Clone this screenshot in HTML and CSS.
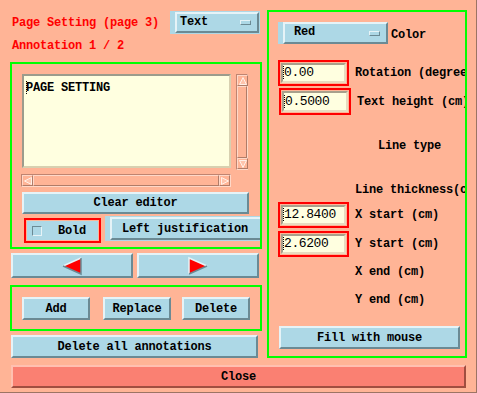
FILE: index.html
```html
<!DOCTYPE html>
<html lang="en">

<head>
  <meta charset="UTF-8">
  <meta name="viewport" content="width=device-width, initial-scale=1.0">
  <title>Page Setting</title>
  <link rel="stylesheet" href="styles.css">
</head>

<body>
  <div class="window">
    <div class="main">
      <div class="left">
        <div class="head">
          <span class="title">Page Setting (page 3)</span>
          <div class="option option-type">
            <div class="option-btn">Text<span class="ind"></span></div>
          </div>
        </div>
        <div class="subtitle">Annotation 1 / 2</div>

        <div class="frame editor-frame">
          <div class="editor-row">
            <div class="textarea"><span class="cursor"></span>PAGE SETTING</div>
            <div class="vscroll">
              <div class="arrow-box">
                <svg width="8" height="8" viewBox="0 0 8 8"><polygon points="4,0.5 7.5,7.5 0.5,7.5" fill="#ffc4ac" stroke="#fff0e8" stroke-width="1"/></svg>
              </div>
              <div class="thumb"></div>
              <div class="arrow-box">
                <svg width="8" height="8" viewBox="0 0 8 8"><polygon points="0.5,0.5 7.5,0.5 4,7.5" fill="#ffc4ac" stroke="#fff0e8" stroke-width="1"/></svg>
              </div>
            </div>
          </div>
          <div class="hscroll">
            <div class="arrow-box">
              <svg width="8" height="8" viewBox="0 0 8 8"><polygon points="0.5,4 7.5,0.5 7.5,7.5" fill="#ffc4ac" stroke="#fff0e8" stroke-width="1"/></svg>
            </div>
            <div class="thumb"></div>
            <div class="arrow-box">
              <svg width="8" height="8" viewBox="0 0 8 8"><polygon points="0.5,0.5 7.5,4 0.5,7.5" fill="#ffc4ac" stroke="#fff0e8" stroke-width="1"/></svg>
            </div>
          </div>
          <div class="btn clear-btn">Clear editor</div>
          <div class="style-row">
            <div class="toggle">
              <div class="toggle-inner"><span class="check"></span>Bold</div>
            </div>
            <div class="option option-just">
              <div class="option-btn">Left justification</div>
            </div>
          </div>
        </div>

        <div class="nav-row">
          <div class="btn nav-btn">
            <svg width="22" height="20" viewBox="0 0 22 20">
              <polygon points="2,10 20,2 20,18" fill="#ff0000"/>
              <polyline points="2,10 20,2" fill="none" stroke="#e6f3f7" stroke-width="1.5"/>
              <polyline points="20,2 20,18 2,10" fill="none" stroke="#6b8a94" stroke-width="1.5"/>
            </svg>
          </div>
          <div class="btn nav-btn">
            <svg width="22" height="20" viewBox="0 0 22 20">
              <polygon points="2,2 20,10 2,18" fill="#ff0000"/>
              <polyline points="2,18 2,2 20,10" fill="none" stroke="#e6f3f7" stroke-width="1.5"/>
              <polyline points="20,10 2,18" fill="none" stroke="#6b8a94" stroke-width="1.5"/>
            </svg>
          </div>
        </div>

        <div class="frame action-frame">
          <div class="btn action-btn">Add</div>
          <div class="btn action-btn replace">Replace</div>
          <div class="btn action-btn delete">Delete</div>
        </div>

        <div class="btn delete-all">Delete all annotations</div>
      </div>

      <div class="frame right">
        <div class="color-row">
          <div class="option option-color">
            <div class="option-btn">Red<span class="ind"></span></div>
          </div>
          <span class="label color-label">Color</span>
        </div>
        <div class="field-row rotation-row">
          <div class="field"><div class="input"><span class="cursor"></span>0.00</div></div>
          <span class="label">Rotation (degrees)</span>
        </div>
        <div class="field-row height-row">
          <div class="field"><div class="input"><span class="cursor"></span>0.5000</div></div>
          <span class="label">Text height (cm)</span>
        </div>
        <div class="label line-type">Line type</div>
        <div class="label line-thick">Line thickness(cm)</div>
        <div class="field-row xstart-row">
          <div class="field"><div class="input"><span class="cursor"></span>12.8400</div></div>
          <span class="label">X start (cm)</span>
        </div>
        <div class="field-row ystart-row">
          <div class="field"><div class="input"><span class="cursor"></span>2.6200</div></div>
          <span class="label">Y start (cm)</span>
        </div>
        <div class="label end-label xend">X end (cm)</div>
        <div class="label end-label yend">Y end (cm)</div>
        <div class="btn fill-btn">Fill with mouse</div>
      </div>
    </div>

    <div class="close-btn">Close</div>
  </div>
</body>

</html>
```

FILE: styles.css
```css
* {
  box-sizing: border-box;
}

body {
  margin: 0;
  padding: 0;
  font-family: "Liberation Mono", "DejaVu Sans Mono", monospace;
  font-weight: bold;
  font-size: 12px;
  letter-spacing: -0.2px;
  color: #000;
}

.window {
  width: 477px;
  height: 393px;
  background-color: #ffb496;
  padding: 10px 0 0 10px;
  border-right: 1px solid #9c7464;
  border-bottom: 1px solid #9c7464;
  overflow: hidden;
}

.main {
  display: flex;
  gap: 5px;
  height: 348px;
}

.left {
  width: 252px;
  display: flex;
  flex-direction: column;
}

.frame {
  border: 2px solid #00ff00;
  overflow: hidden;
}

.btn {
  background-color: #add8e6;
  border: 2px solid;
  border-color: #e6f3f7 #6b8a94 #6b8a94 #e6f3f7;
  display: flex;
  align-items: center;
  justify-content: center;
  white-space: nowrap;
}

/* header */
.head {
  height: 24px;
  display: flex;
  align-items: center;
}

.title {
  color: #ff0000;
  padding-left: 2px;
  margin-top: 1px;
}

.subtitle {
  color: #ff0000;
  height: 28px;
  line-height: 24px;
  padding-left: 2px;
}

.option {
  background-color: #add8e6;
  padding: 1px 1px 1px 5px;
}

.option-btn {
  height: 100%;
  border: 2px solid;
  border-color: #e6f3f7 #6b8a94 #6b8a94 #e6f3f7;
  display: flex;
  align-items: center;
  padding-left: 3px;
  position: relative;
  white-space: nowrap;
}

.ind {
  position: absolute;
  right: 6px;
  top: 50%;
  margin-top: -2px;
  width: 11px;
  height: 5px;
  border: 1px solid;
  border-color: #e6f3f7 #6b8a94 #6b8a94 #e6f3f7;
  background-color: #add8e6;
}

.option-type {
  margin-left: auto;
  margin-right: 2px;
  width: 90px;
  height: 23px;
}

/* editor */
.editor-frame {
  height: 187px;
  padding: 10px 0 0 10px;
}

.editor-row {
  display: flex;
  height: 96px;
}

.textarea {
  width: 209px;
  height: 94px;
  background-color: #ffffe0;
  border: 2px solid;
  border-color: #9c9c8c #d8d0b0 #d8d0b0 #9c9c8c;
  padding: 5px 0 0 2px;
  line-height: 14px;
}

.cursor {
  display: inline-block;
  width: 1px;
  height: 13px;
  border-left: 1px dotted #000;
  vertical-align: -3px;
  margin-right: -1px;
}

.vscroll {
  margin-left: 5px;
  width: 12px;
  height: 96px;
  display: flex;
  flex-direction: column;
  border: 1px solid;
  border-color: #c08470 #ffd8c8 #ffd8c8 #c08470;
}

.hscroll {
  margin: 4px 0 0 -1px;
  width: 210px;
  height: 13px;
  display: flex;
  border: 1px solid;
  border-color: #c08470 #ffd8c8 #ffd8c8 #c08470;
}

.arrow-box {
  width: 11px;
  height: 11px;
  flex: none;
  display: flex;
  align-items: center;
  justify-content: center;
  border: 1px solid;
  border-color: #ffd8c8 #b07c68 #b07c68 #ffd8c8;
}

.thumb {
  flex: 1;
  border: 1px solid;
  border-color: #ffd8c8 #b07c68 #b07c68 #ffd8c8;
}

.clear-btn {
  margin-top: 5px;
  width: 227px;
  height: 22px;
}

.style-row {
  display: flex;
  align-items: flex-start;
  margin-top: 2px;
}

.toggle {
  margin: 2px 0 0 2px;
  width: 77px;
  height: 25px;
  border: 2px solid #ff0000;
  padding: 1px;
  flex: none;
}

.toggle-inner {
  height: 100%;
  background-color: #add8e6;
  display: flex;
  align-items: center;
}

.check {
  width: 10px;
  height: 10px;
  margin: 0 16px 0 5px;
  border: 1px solid;
  border-color: #6b8a94 #e6f3f7 #e6f3f7 #6b8a94;
}

.option-just {
  margin-left: 4px;
  width: 160px;
  height: 25px;
  flex: none;
}

.option-just .option-btn {
  height: 23px;
  padding-left: 10px;
}

/* nav */
.nav-row {
  display: flex;
  gap: 4px;
  margin: 4px 0 0 1px;
}

.nav-btn {
  width: 122px;
  height: 25px;
}

/* actions */
.action-frame {
  margin-top: 7px;
  height: 46px;
  padding: 10px 0 0 10px;
  display: flex;
  align-items: flex-start;
}

.action-btn {
  width: 68px;
  height: 23px;
}

.replace {
  margin-left: 13px;
}

.delete {
  margin-left: 11px;
}

.delete-all {
  margin: 4px 0 0 1px;
  width: 247px;
  height: 23px;
}

/* right panel */
.right {
  width: 200px;
  height: 348px;
  padding: 0 0 0 9px;
  display: flex;
  flex-direction: column;
}

.color-row {
  display: flex;
  margin-top: 10px;
  height: 22px;
}

.option-color {
  width: 110px;
  height: 22px;
  padding: 0 0 0 5px;
}

.option-color .option-btn {
  padding-left: 9px;
  align-items: flex-start;
  padding-top: 1px;
}

.label {
  white-space: nowrap;
}

.color-label {
  margin: 6px 0 0 3px;
}

.field-row {
  display: flex;
  align-items: center;
  height: 27px;
}

.field {
  width: 71px;
  height: 26px;
  border: 2px solid #ff0000;
  padding: 1px;
  flex: none;
}

.input {
  height: 100%;
  background-color: #ffffe0;
  border: 2px solid;
  border-color: #a8a08c #e8dcc0 #e8dcc0 #a8a08c;
  display: flex;
  align-items: center;
  font-weight: normal;
  font-size: 13px;
  letter-spacing: -0.4px;
}

.input .cursor {
  margin-right: 0;
}

.field-row .label {
  margin-left: 6px;
}

.rotation-row {
  margin-top: 15px;
}

.height-row {
  margin-top: 2px;
  padding-left: 1px;
}

.height-row .field {
  width: 72px;
  height: 27px;
}

.line-type {
  margin: 24px 0 0 100px;
}

.line-thick {
  margin: 30px 0 0 77px;
}

.xstart-row {
  margin-top: 4px;
}

.ystart-row {
  margin-top: 2px;
}

.end-label {
  margin-left: 77px;
}

.xend {
  margin-top: 8px;
}

.yend {
  margin-top: 14px;
}

.fill-btn {
  margin: 19px 0 0 1px;
  width: 181px;
  height: 23px;
}

/* close */
.close-btn {
  margin: 7px 0 0 1px;
  width: 455px;
  height: 23px;
  background-color: #fa8072;
  border: 2px solid;
  border-color: #ffc0b0 #a04e40 #a04e40 #ffc0b0;
  display: flex;
  align-items: center;
  justify-content: center;
}
```
